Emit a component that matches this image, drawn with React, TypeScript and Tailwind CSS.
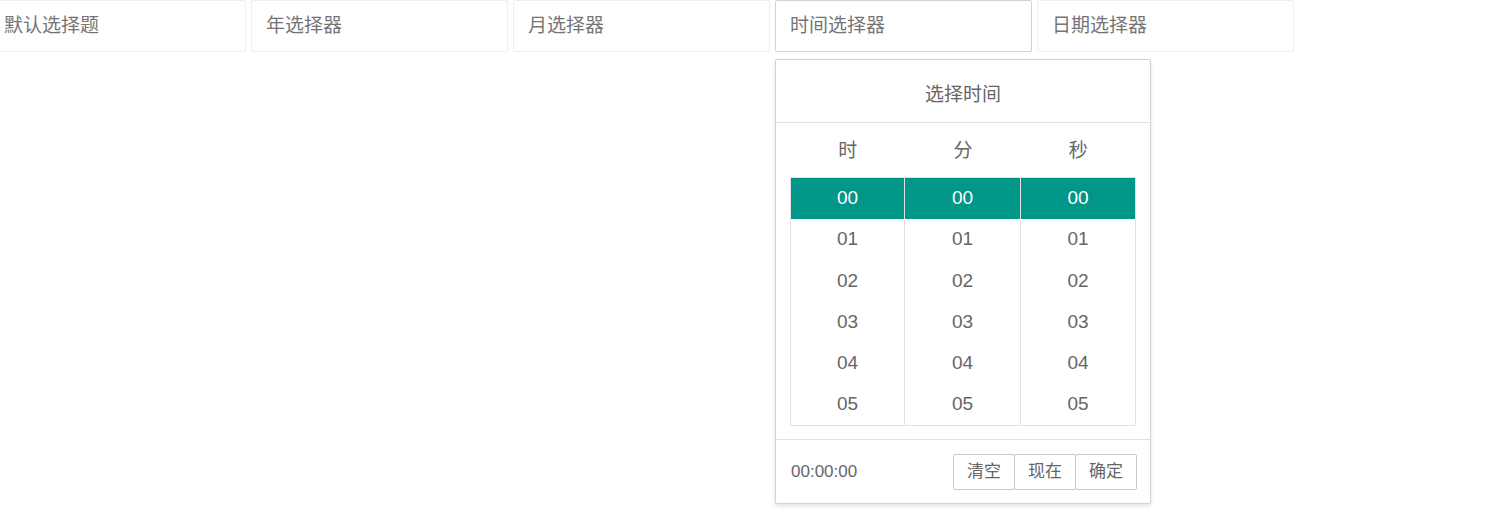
import { useState } from 'react';

const fields = [
  { id: 'default', label: '默认选择题' },
  { id: 'year', label: '年选择器' },
  { id: 'month', label: '月选择器' },
  { id: 'time', label: '时间选择器' },
  { id: 'date', label: '日期选择器' },
];

const units = ['时', '分', '秒'];
const values = ['00', '01', '02', '03', '04', '05'];

function TimePanel() {
  const [picked, setPicked] = useState(['00', '00', '00']);
  const pick = (unit: number, value: string) =>
    setPicked(picked.map((v, i) => (i === unit ? value : v)));

  return (
    <div
      role="dialog"
      aria-label="选择时间"
      className="absolute left-0 top-full z-10 mt-[7px] w-[376px] rounded-xs border border-[#d2d2d2] bg-white text-[#666] shadow-[0_2px_4px_rgba(0,0,0,0.12)]"
    >
      <h2 className="border-b border-[#e2e2e2] pb-3 pt-5 text-center text-[19px] leading-[30px]">选择时间</h2>
      <div className="px-[14px] pb-[13px]">
        <div className="grid grid-cols-3 pb-[11px] pt-[13px] text-center text-[19px] leading-[30px]">
          {units.map((unit) => (
            <span key={unit}>{unit}</span>
          ))}
        </div>
        <div className="grid grid-cols-[114fr_116fr_114fr] border border-[#e2e2e2]">
          {units.map((unit, i) => (
            <ul
              key={unit}
              aria-label={unit}
              className="grid h-[247px] grid-rows-6 border-r border-[#e2e2e2] last:border-r-0"
            >
              {values.map((value) => (
                <li key={value} className="flex">
                  <button
                    type="button"
                    aria-pressed={picked[i] === value}
                    onClick={() => pick(i, value)}
                    className={
                      picked[i] === value
                        ? 'flex-1 cursor-pointer bg-[#009688] text-center text-[19px] text-white'
                        : 'flex-1 cursor-pointer text-center text-[19px]'
                    }
                  >
                    {value}
                  </button>
                </li>
              ))}
            </ul>
          ))}
        </div>
      </div>
      <div className="flex items-center justify-between border-t border-[#e2e2e2] pb-[13px] pl-[15px] pr-[13px] pt-[14px] text-[17px]">
        <span>{picked.join(':')}</span>
        <div className="flex -space-x-px">
          {['清空', '现在', '确定'].map((name) => (
            <button
              key={name}
              type="button"
              onClick={name === '清空' ? () => setPicked(['00', '00', '00']) : undefined}
              className="h-9 cursor-pointer rounded-xs border border-[#c9c9c9] bg-white px-[13px] leading-[34px]"
            >
              {name}
            </button>
          ))}
        </div>
      </div>
    </div>
  );
}

export default function App() {
  return (
    <main className="min-h-screen overflow-hidden bg-white font-['Liberation_Sans','Noto_Sans_CJK_SC',sans-serif]">
      <div className="-ml-[11px] flex gap-[5px]">
        {fields.map(({ id, label }) => (
          <div key={id} className="relative w-[257px]">
            <input
              id={id}
              type="text"
              aria-label={label}
              placeholder={label}
              className={
                id === 'time'
                  ? 'block h-[52px] w-full rounded-xs border border-[#d2d2d2] px-[14px] text-[19px] outline-none placeholder:text-[#757575]'
                  : 'block h-[52px] w-full rounded-xs border border-[#eee] px-[14px] text-[19px] outline-none placeholder:text-[#757575] focus:border-[#d2d2d2]'
              }
            />
            {id === 'time' && <TimePanel />}
          </div>
        ))}
      </div>
    </main>
  );
}
